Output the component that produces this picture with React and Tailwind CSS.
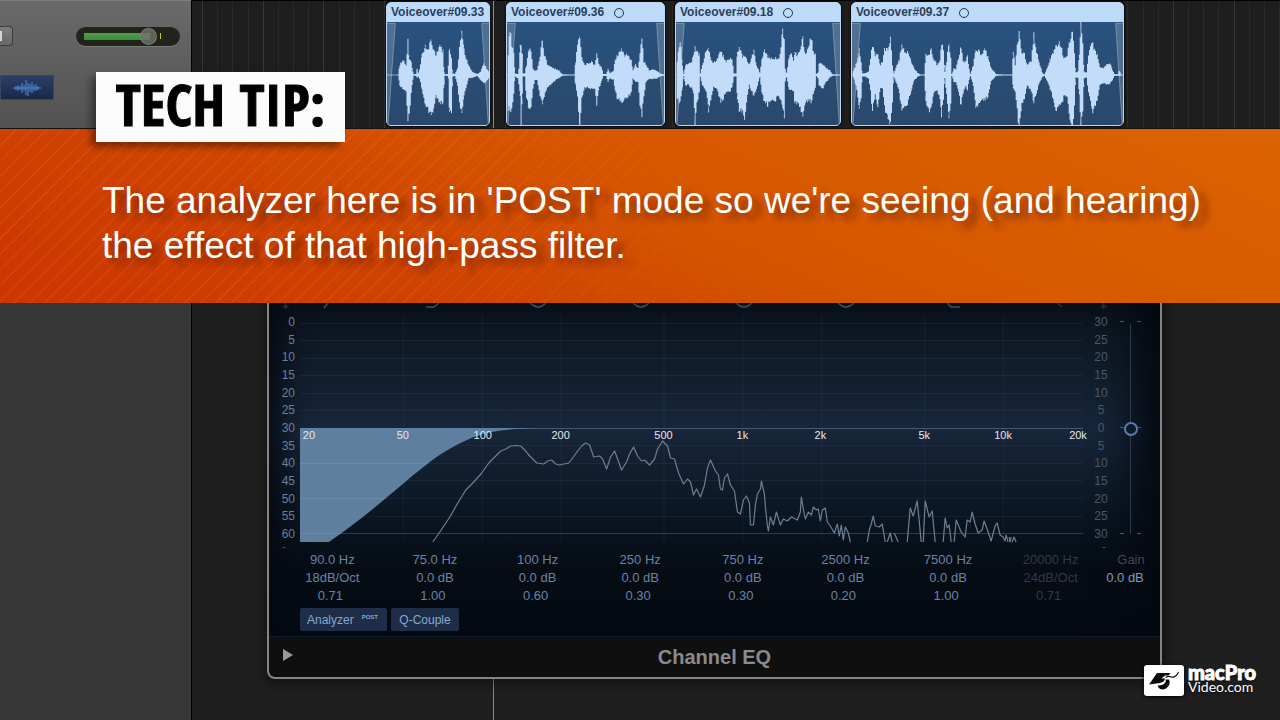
const CLIPS = [
  {
    name: 'Voiceover#09.33',
    loop: false,
    box: 'w-[104px] ml-[194px]',
    left: 18,
    width: 309,
    wave: [[50,0,0],[55,30,30],[65,45,45],[74,30,50],[80,105,130],[84,50,125],[90,40,50],[95,10,15],[98,2,2],[104,3,3],[108,20,8],[112,5,5],[118,30,20],[122,60,40],[132,85,90],[140,75,105],[150,110,110],[158,70,100],[165,60,60],[178,85,90],[186,70,80],[190,10,30],[192,2,2],[200,3,3],[202,30,10],[206,85,120],[212,50,110],[216,5,5],[222,3,3],[230,20,30],[236,80,90],[243,125,110],[250,80,60],[256,50,40],[264,30,10],[275,10,8],[290,3,3],[300,10,15],[310,35,25],[318,20,20],[325,10,10]],
  },
  {
    name: 'Voiceover#09.36',
    loop: true,
    box: 'w-[159px] ml-4',
    left: 379,
    width: 473,
    wave: [[381,60,110],[386,140,100],[392,90,110],[398,70,60],[402,5,5],[410,3,10],[413,20,30],[417,90,60],[420,90,158],[424,60,60],[426,5,5],[431,5,5],[436,30,70],[444,80,105],[450,70,90],[456,20,40],[462,12,15],[468,15,15],[474,40,50],[484,110,80],[490,60,60],[500,30,35],[512,22,28],[524,18,15],[534,14,10],[545,2,2],[560,1,1],[580,1,1],[584,40,30],[590,90,60],[597,120,158],[603,50,70],[612,30,40],[620,36,35],[632,38,40],[642,30,40],[648,60,90],[655,30,40],[662,25,20],[668,3,3],[676,3,3],[682,18,20],[688,6,10],[698,12,14],[703,45,50],[712,60,75],[722,75,80],[732,60,70],[742,60,70],[752,45,50],[757,15,10],[765,30,20],[772,20,20],[778,60,90],[784,110,130],[790,40,60],[797,30,20],[806,14,12],[818,18,12],[830,12,10],[840,4,4],[850,2,2]],
  },
  {
    name: 'Voiceover#09.18',
    loop: true,
    box: 'w-[166px] ml-[10px]',
    left: 46,
    width: 496,
    wave: [[48,40,75],[54,90,80],[60,90,70],[64,30,40],[68,3,3],[73,30,30],[82,36,30],[92,38,38],[97,60,60],[102,80,140],[108,70,90],[115,60,50],[118,5,5],[124,30,30],[130,50,40],[136,75,50],[143,80,105],[150,50,70],[158,34,35],[168,45,40],[180,70,85],[188,55,70],[196,40,55],[206,50,50],[214,50,40],[220,5,5],[226,4,4],[230,70,80],[238,80,110],[246,55,110],[252,55,125],[258,50,80],[266,30,30],[272,50,50],[280,75,60],[288,30,40],[298,6,6],[304,45,50],[312,70,85],[322,55,90],[334,48,80],[346,52,75],[356,50,60],[362,80,80],[367,142,110],[372,100,120],[375,20,20],[379,6,6],[386,50,40],[394,70,45],[400,40,50],[404,70,90],[412,60,80],[420,80,90],[428,105,120],[436,60,80],[444,75,80],[453,115,80],[460,70,60],[466,60,40],[469,3,3],[474,8,10],[478,40,35],[490,30,38],[500,20,20],[510,14,8],[518,2,2],[540,1,1]],
  },
  {
    name: 'Voiceover#09.37',
    loop: true,
    box: 'w-[273px] ml-[10px]',
    left: 36,
    width: 813,
    wave: [[38,12,6],[46,30,30],[52,50,70],[56,75,105],[62,40,70],[66,5,5],[76,6,5],[84,10,12],[90,50,50],[96,90,110],[104,60,60],[112,60,90],[120,30,40],[126,40,40],[132,80,100],[142,80,120],[150,105,140],[156,30,80],[160,5,6],[166,20,20],[176,45,50],[184,90,110],[192,70,100],[204,70,80],[214,35,40],[222,18,16],[232,6,5],[240,1,1],[251,1,1],[256,60,80],[264,60,110],[272,80,95],[280,45,50],[290,30,45],[298,40,70],[303,90,130],[309,80,70],[313,10,10],[318,40,60],[325,98,130],[331,50,80],[334,3,3],[340,20,20],[346,18,20],[354,50,55],[362,85,90],[368,40,55],[376,40,30],[381,60,45],[386,20,15],[390,3,3],[398,30,30],[406,80,90],[414,70,85],[424,60,72],[434,75,78],[444,50,60],[452,20,20],[462,10,8],[468,2,2],[490,1,1],[514,1,1],[518,70,40],[524,30,50],[530,90,110],[536,130,158],[544,70,80],[552,60,70],[560,30,30],[572,40,50],[580,118,80],[588,70,60],[596,40,25],[606,6,6],[612,2,2],[620,20,20],[630,50,45],[640,70,80],[648,90,105],[656,95,90],[664,80,90],[670,50,60],[680,60,60],[688,100,130],[696,130,158],[702,60,100],[706,8,8],[712,10,8],[716,60,60],[721,158,158],[727,100,110],[731,10,10],[738,8,8],[744,60,50],[754,100,110],[762,75,100],[770,60,75],[778,25,30],[788,20,25],[798,32,28],[808,36,25],[816,15,15],[822,3,3],[832,2,2],[836,14,3],[842,1,1],[848,1,1]],
  },
];

function wavePath(points) {
  const top = [];
  const bottom = [];
  let seed = 7;
  for (let i = 0; i < points.length - 1; i += 1) {
    const [x0, u0, d0] = points[i];
    const [x1, u1, d1] = points[i + 1];
    for (let x = x0; x < x1; x += 3) {
      const t = (x - x0) / (x1 - x0);
      seed = (seed * 73 + 41) % 101;
      const k = 0.9 + (seed / 101) * 0.2;
      seed = (seed * 73 + 41) % 101;
      const m = 0.9 + (seed / 101) * 0.2;
      const up = Math.max(1, (u0 + (u1 - u0) * t) * k);
      const down = Math.max(1, (d0 + (d1 - d0) * t) * m);
      top.push(`L${x} ${(225 - up).toFixed(1)}H${x + 3}`);
      bottom.unshift(`L${x + 3} ${(225 + down).toFixed(1)}H${x}`);
    }
  }
  return `M${points[0][0]} 225${top.join('')}${bottom.join('')}Z`;
}

function Clip({ clip }) {
  const r = clip.left + clip.width;
  return (
    <article className={`relative flex h-[124px] shrink-0 flex-col overflow-hidden rounded-[5px] border border-[#b9d6f5] bg-[#bddaf9] shadow-[0_0_2px_1px_#0a0a0a] ${clip.box}`}>
      <header className="flex h-[19px] items-center gap-[10px] whitespace-nowrap pl-1 text-[12px] font-bold leading-[19px] text-[#27405f]">
        {clip.name}
        {clip.loop && <span className="size-[10px] rounded-full border border-[#1c3658]" />}
      </header>
      <svg className="w-full flex-1 bg-linear-to-b from-[#28527f] to-[#2a486c]" viewBox={`${clip.left} 66 ${clip.width} 309`} preserveAspectRatio="none" aria-hidden="true">
        <path d={`M${clip.left} 70H${clip.left + 25}L${clip.left + 3} 375H${clip.left}Z`} fill="#8da0b5" fillOpacity=".4" />
        <path d={`M${r} 70H${r - 22}L${r - 2} 375H${r}Z`} fill="#8da0b5" fillOpacity=".4" />
        <path d={`M${clip.left} 225H${r}`} stroke="#bddaf9" strokeWidth="2" />
        <path d={wavePath(clip.wave)} fill="#c3dcfa" />
        <path d={`M${clip.left} 70H${clip.left + 25}L${clip.left + 3} 375M${r} 70H${r - 22}L${r - 2} 375`} fill="none" stroke="#c9d3de" strokeOpacity=".6" strokeWidth="2" />
      </svg>
    </article>
  );
}

function TimelineGrid() {
  return (
    <svg className="absolute inset-0 h-full w-full" aria-hidden="true">
      {Array.from({ length: 160 }, (_, i) => (
        <rect key={i} x={Math.round(10 + i * 15.17)} y="0" width="1" height="100%" fill={i % 4 === 0 ? '#373737' : '#292929'} />
      ))}
    </svg>
  );
}

function TrackHeader() {
  return (
    <section className="relative w-48 shrink-0 overflow-hidden border-r border-black bg-linear-to-b from-[#6a6a6a] to-[#525252] shadow-[inset_0_1px_0_#7c7c7c]">
      <div className="flex items-center pt-[26px]">
        <button type="button" aria-label="Track option" className="flex h-5 w-[13px] items-center rounded-r-[4px] border border-l-0 border-[#3c3c3c] bg-linear-to-b from-[#7c7c7c] to-[#686868]">
          <span className="h-[10px] w-[2px] bg-[#d6d6d6]" />
        </button>
        <div className="relative ml-[63px] h-[19px] w-[104px] rounded-full bg-[#20241a] shadow-[0_1px_0_#7a7a7a]">
          <div className="absolute left-2 top-[6px] h-[7px] w-[66px] bg-linear-to-b from-[#4ea049] to-[#3b8a38]" />
          <div className="absolute left-[84px] top-[6px] h-[6px] w-px bg-[#c9c92c]" />
          <input
            type="range"
            aria-label="Track volume"
            defaultValue="73"
            className="absolute inset-0 h-full w-full appearance-none bg-transparent [&::-webkit-slider-thumb]:size-[17px] [&::-webkit-slider-thumb]:appearance-none [&::-webkit-slider-thumb]:rounded-full [&::-webkit-slider-thumb]:border [&::-webkit-slider-thumb]:border-[#858585]/60 [&::-webkit-slider-thumb]:bg-[#70736a]/80"
          />
        </div>
      </div>
      <div className="mt-[29px] flex h-[25px] w-[54px] items-center justify-center border border-[#39465c] bg-linear-to-b from-[#2a3f68] to-[#1b2848]">
        <svg className="h-5 w-7" viewBox="0 0 28 20" stroke="#4d86cf" strokeWidth="1.1" aria-hidden="true">
          <path d="M1 9.500v1M3 8v4M5 7v6M7 8v4M9 5v10M11 7v6M13 2v15M15 5v13M17 6v8M19 4v11M21 7v6M23 6v7M25 8v4M27 9.500v1M0 10h28" />
        </svg>
      </div>
    </section>
  );
}

const LEFT_SCALE = [0, 5, 10, 15, 20, 25, 30, 35, 40, 45, 50, 55, 60];
const RIGHT_SCALE = [30, 25, 20, 15, 10, 5, 0, 5, 10, 15, 20, 25, 30];
const FREQS = [
  ['20', 309], ['50', 403], ['100', 483], ['200', 561], ['500', 664], ['1k', 743], ['2k', 821], ['5k', 925], ['10k', 1004], ['20k', 1079],
];
const ANALYZER = [
  'M433 542L440 532L450 517L458 503L466 490L474 482L482 473L489 463L496 456L501 451L506 449L511 446L516 445.500L521 446L525 450L530 456L537 463L544 464L548 461L552 460L556 464L560 465L564 464L569 463L573 458L578 451L582 446L586 443L590 445L594 457L600 456L603 459L607 469L611 457L615 451L618 459L622 470L627 462L630 454L634 447L638 456L642 461L645 460L650 465L655 459L658 449L663 441L668 446L671 458L675 459L679 473L684 484L688 479L691 482L694 495L697 489L701 497L705 485L708 468L711 460L716 471L719 475L721 489L723 490L725 478L728 474L731 485L735 491L738 512L741 514L744 500L747 496L750 503L751 525L754 525L756 505L758 494L761 489L762 481L765 494L766 507L768 526L769 531L771 517L774 525L777 512L781 525L784 519L788 521L792 517L798 520L801 512L802 497L804 509L806 519L809 512L812 515L814 507L817 510L819 509L821 521L823 510L826 508L828 522L831 526L835 533L838 524L840 536L842 525L844 540L846 527L849 533L851 542',
  'M868 542L870 530L872 524L874 516L876 526L880 527L883 524L886 542M888 542L891 533L893 542M895 533L899 542',
  'M908 542L911 508L914 516L918 501L920 521L922 542M924 542L926 501L930 517L933 511L936 542',
  'M944 542L946 518L948 528L950 525L952 542M955 542L957 520L962 532L966 537L968 520L971 522L973 512L976 524L979 533L983 530L985 521L988 529L992 541L996 526L998 523L1001 535L1004 537L1006 541L1007 535L1009 542M1010 537L1011 542L1012 537M1013 542L1015 537L1017 542',
];

function Scale({ values, className }) {
  return (
    <div className={`relative flex flex-col justify-between text-[12px] leading-[17px] ${className}`}>
      {values.map((v, i) => <span key={i}>{v}</span>)}
    </div>
  );
}

function Plot() {
  return (
    <div className="relative h-[229px] flex-1">
      <svg className="h-full w-full" viewBox="300 314 784 229" preserveAspectRatio="none" aria-hidden="true">
        {LEFT_SCALE.map((v, i) => (
          <rect key={v} x="300" y={Math.round(322.500 + i * 17.550)} width="784" height="1" fill="#9fb4d0" fillOpacity={v === 30 ? 0.35 : v === 60 ? 0.25 : 0.07} />
        ))}
        {[403, 482, 561, 664, 743, 822, 925, 1004].map((x) => (
          <rect key={x} x={x} y="314" width="1" height="228" fill="#9fb4d0" fillOpacity=".07" />
        ))}
        <path d="M300 428H540C500 429 483 432 463 442C440 453 428 463 403 484C378 505 358 522 329 542H300Z" fill="#5f7f9f" />
        <path d="M300 463.500H428M300 498.500H385M300 533.500H341" stroke="#7f9cbb" strokeOpacity=".4" />
        {ANALYZER.map((d) => (
          <path key={d} d={d} fill="none" stroke="#6e7f93" strokeWidth="1.2" strokeLinejoin="round" vectorEffect="non-scaling-stroke" />
        ))}
      </svg>
      {FREQS.map(([label, x]) => (
        <span key={label} className="absolute top-[114px] -translate-x-1/2 text-[11px] leading-[14px] text-[#e3e8ee]" style={{ left: `${((x - 300) / 784) * 100}%` }}>
          {label}
        </span>
      ))}
    </div>
  );
}

const BANDS = [
  ['90.0 Hz', '18dB/Oct', '0.71'],
  ['75.0 Hz', '0.0 dB', '1.00'],
  ['100 Hz', '0.0 dB', '0.60'],
  ['250 Hz', '0.0 dB', '0.30'],
  ['750 Hz', '0.0 dB', '0.30'],
  ['2500 Hz', '0.0 dB', '0.20'],
  ['7500 Hz', '0.0 dB', '1.00'],
  ['20000 Hz', '24dB/Oct', '0.71'],
];

function BandTable() {
  return (
    <table className="relative ml-3 w-[867px] table-fixed border-collapse text-center text-[13px] leading-[18px] text-[#6b82a3]">
      <colgroup>
        {BANDS.map((b) => <col key={b[0]} />)}
        <col className="w-[46px]" />
      </colgroup>
      <tbody>
        {[0, 1, 2].map((row) => (
          <tr key={row}>
            {BANDS.map((band, i) => (
              <td key={band[0]} className={`p-0 ${i === 7 ? 'text-[#2f3a48]' : ''} ${row === 2 ? 'pr-1' : ''}`}>{band[row]}</td>
            ))}
            <td className={`whitespace-nowrap p-0 ${row === 0 ? 'pl-3 text-[#3c4856]' : 'text-[#8298b5]'}`}>
              {row === 0 && 'Gain'}
              {row === 1 && '0.0 dB'}
            </td>
          </tr>
        ))}
      </tbody>
    </table>
  );
}

function FilterIcons() {
  return (
    <svg className="h-[11px] w-full" viewBox="269 303 891 11" preserveAspectRatio="none" fill="none" stroke="#5c728f" strokeWidth="1.500" aria-hidden="true">
      <path d="M285.500 303v6M282.500 306.500h6M328 303l-4 5M426 307h8l5-4M530 303q8 8 16 0M633 303q8 8 16 0M736 303q8 8 16 0M838 303q8 8 16 0M947 303l4 4h9" />
      <path d="M1057 303l5 4M1103.500 303v6M1100.500 306.500h6" stroke="#3c4856" />
    </svg>
  );
}

function EqWindow() {
  return (
    <section className="relative ml-[75px] w-[895px] overflow-hidden rounded-b-[8px] border-2 border-t-0 border-[#858585] bg-[#0f0f0f] shadow-[0_2px_10px_4px_rgba(0,0,0,0.35)]">
      <div className="relative flex h-[334px] flex-col border-b border-[#0f1d30] bg-linear-to-b from-[#0c141d] via-[#17263a] via-38% to-[#050c14] to-80%">
        <div className="pointer-events-none absolute inset-0 shadow-[inset_24px_0_30px_-12px_#050a11,inset_-40px_0_40px_-12px_#050a11]" />
        <FilterIcons />
        <div className="relative flex">
          <Scale values={LEFT_SCALE} className="w-[26px] items-end text-[#6b7f99]" />
          <div className="w-[5px]" />
          <Plot />
          <Scale values={RIGHT_SCALE} className="w-9 items-center text-[#4a5866]" />
          <div className="relative flex w-[41px] justify-start">
            <div className="absolute left-[11px] top-[10px] h-[210px] w-px bg-[#2f3a48]" />
            <div className="absolute left-px top-[7px] flex h-[213px] w-[21px] flex-col justify-between">
              {[0, 1, 2].map((i) => (
                <span key={i} className="flex justify-between">
                  <i className="h-px w-1 bg-[#4a5866]" />
                  <i className="h-px w-1 bg-[#4a5866]" />
                </span>
              ))}
            </div>
            <input
              type="range"
              aria-label="Gain"
              min="-30"
              max="30"
              defaultValue="0"
              className="absolute left-1 top-[8px] h-[213px] w-[15px] appearance-none bg-transparent [direction:rtl] [writing-mode:vertical-lr] [&::-webkit-slider-thumb]:size-[14px] [&::-webkit-slider-thumb]:appearance-none [&::-webkit-slider-thumb]:rounded-full [&::-webkit-slider-thumb]:border-2 [&::-webkit-slider-thumb]:border-[#5a7ba6] [&::-webkit-slider-thumb]:bg-[#0c1a2e]"
            />
          </div>
        </div>
        <div className="flex h-2 justify-between pl-[13px] pr-[54px] text-[12px] leading-[8px] text-[#6b7f99]">
          <span>-</span>
          <span className="text-[#4a5866]">-</span>
        </div>
        <BandTable />
        <div className="relative mt-[3px] flex gap-1 pl-[31px] text-[12px] leading-[22px] text-[#86a8d4]">
          <button type="button" className="flex h-[23px] w-[87px] items-center gap-2 rounded-[2px] bg-[#1e2e48] pl-[7px]">
            Analyzer
            <span className="self-start text-[6px] font-bold leading-[19px]">POST</span>
          </button>
          <button type="button" className="h-[23px] w-[68px] rounded-[2px] bg-[#1e2e48]">Q-Couple</button>
        </div>
      </div>
      <footer className="relative flex h-[40px] items-center justify-center">
        <button type="button" aria-label="Show controls" className="absolute left-[14px] top-[12px]">
          <svg className="h-3 w-[10px]" viewBox="0 0 10 12" fill="#9a9a9a" aria-hidden="true"><path d="M0 0L10 6L0 12Z" /></svg>
        </button>
        <h2 className="text-[20px] font-bold leading-none text-[#8a8a8a]">Channel EQ</h2>
      </footer>
    </section>
  );
}

function Brand() {
  return (
    <div className="absolute bottom-6 right-6 flex gap-1 text-white">
      <div className="mt-px flex h-[31px] w-10 items-center justify-center rounded-[3px] bg-white shadow-[0_1px_4px_#000]">
        <svg className="h-[22px] w-8" viewBox="0 0 32 22" aria-hidden="true">
          <path d="M9 3H22.500L20.500 5.500H17L13.500 8.500L17 8.500Q16.500 12 12 13L1 14.500Z" fill="#0b0b0b" />
          <path d="M9.500 15.500Q14 16 17 13Q18.500 11 17.500 9.500H21Q22.500 13 20.500 16Q18 19.500 14 19.500Q10.500 19 9.500 15.500Z" fill="#0b0b0b" />
          <path d="M17.500 7.500Q21 5.500 23 7Q28 8 30.500 2" fill="none" stroke="#0b0b0b" strokeWidth="1.100" />
        </svg>
      </div>
      <div className="w-[68px] font-['Lato',sans-serif] [text-shadow:0_1px_3px_#000]">
        <div className="text-[20px] font-black leading-[17px] [-webkit-text-stroke:1px_white]">macPro</div>
        <div className="text-[14px] leading-[12px]">Video.com</div>
      </div>
    </div>
  );
}

export default function App() {
  return (
    <div className="relative flex min-h-screen flex-col overflow-hidden bg-[#1f1f1f] font-['Liberation_Sans',Arial,sans-serif]">
      <div className="flex h-[129px] border-b border-[#111]">
        <TrackHeader />
        <section className="relative flex flex-1 overflow-hidden border-t border-black bg-[#1e1e1e] pt-px">
          <TimelineGrid />
          <div className="absolute left-[301px] top-0 h-full w-px bg-[#8a8a8a]" />
          {CLIPS.map((clip) => <Clip key={clip.name} clip={clip} />)}
        </section>
      </div>

      <section className="relative h-[174px] bg-[linear-gradient(25deg,#cc3500_0%,#cf4400_30%,#d65600_55%,#dc6300_100%)] px-[102px] pt-[49px]">
        <div className="absolute inset-0 bg-[repeating-linear-gradient(135deg,rgba(255,170,70,0.12)_0px,rgba(255,170,70,0.12)_1px,transparent_2px,transparent_11px)] [mask-image:linear-gradient(90deg,#000_30%,transparent_65%)]" />
        <h1 className="absolute left-24 top-[-57px] flex h-[70px] w-[249px] items-center justify-center bg-[#fcfcfc] pb-[6px] font-['Open_Sans_Condensed','Open_Sans',sans-serif] text-[58px] font-bold leading-none text-black shadow-[-5px_5px_7px_rgba(0,0,0,0.4)] [-webkit-text-stroke:1px_black]">
          TECH TIP:
        </h1>
        <p className="relative -mr-[60px] text-[37px] leading-[45px] text-white [text-shadow:8px_6px_7px_rgba(80,20,0,0.6)]">
          The analyzer here is in 'POST' mode so we're seeing (and hearing) the effect of that high-pass filter.
        </p>
      </section>

      <div className="flex flex-1">
        <aside className="w-48 shrink-0 border-r border-black bg-[#363636]" />
        <main className="relative flex-1 overflow-hidden pb-10">
          <div className="absolute left-[301px] top-0 h-full w-px bg-[#8a8a8a]" />
          <EqWindow />
        </main>
      </div>
      <Brand />
    </div>
  );
}
